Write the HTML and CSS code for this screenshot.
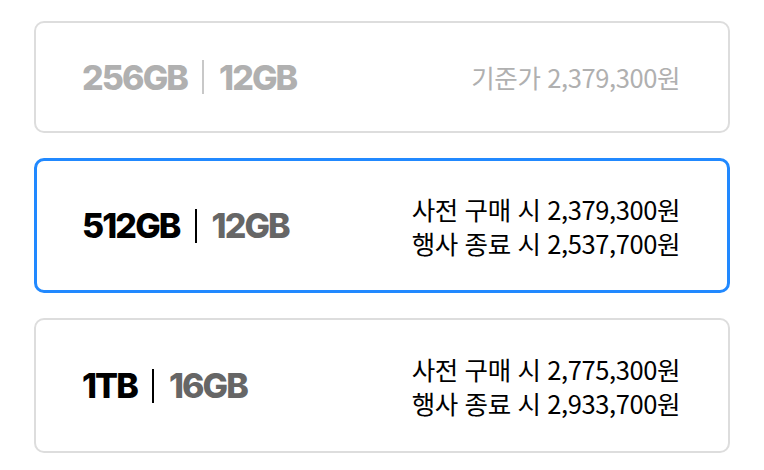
FILE: index.html
```html
<!DOCTYPE html>
<html lang="ko">
<head>
    <meta charset="UTF-8">
    <meta name="viewport" content="width=device-width, initial-scale=1.0">
    <title>저장 용량 선택</title>
    <link rel="stylesheet" href="styles.css">
</head>
<body>
    <div class="opcoes">
        <div class="opcao desativada">
            <div class="capacidade">
                <span class="armazenamento">256GB</span>
                <span class="divisor"></span>
                <span class="memoria">12GB</span>
            </div>
            <div class="preco">기준가 2,379,300원</div>
        </div>
        <div class="opcao selecionada">
            <div class="capacidade">
                <span class="armazenamento">512GB</span>
                <span class="divisor"></span>
                <span class="memoria">12GB</span>
            </div>
            <div class="preco">
                사전 구매 시 2,379,300원<br>
                행사 종료 시 2,537,700원
            </div>
        </div>
        <div class="opcao">
            <div class="capacidade">
                <span class="armazenamento">1TB</span>
                <span class="divisor"></span>
                <span class="memoria">16GB</span>
            </div>
            <div class="preco">
                사전 구매 시 2,775,300원<br>
                행사 종료 시 2,933,700원
            </div>
        </div>
    </div>
</body>
</html>
```

FILE: styles.css
```css
body {
    margin: 0;
    background: #fff;
    font-family: "Noto Sans CJK KR", "Noto Sans", sans-serif;
}
.opcoes {
    padding: 21px 34px;
    display: flex;
    flex-direction: column;
    gap: 25px;
}
.opcao {
    box-sizing: border-box;
    height: 135px;
    border: 2px solid #dddddd;
    border-radius: 10px;
    padding: 0 48px 0 46px;
    display: flex;
    justify-content: space-between;
    align-items: center;
}
.opcao.desativada {
    height: 112px;
}
.opcao.selecionada {
    border: 3px solid #2189ff;
    padding: 0 47px 0 45px;
}
.capacidade {
    display: flex;
    align-items: center;
    gap: 15px;
    font-family: Inter, "Liberation Sans", sans-serif;
    font-weight: 800;
    font-size: 34px;
    letter-spacing: -1.9px;
}
.armazenamento {
    color: #000;
}
.memoria {
    color: #666;
}
.divisor {
    width: 2px;
    height: 34px;
    background: #000;
}
.preco {
    font-size: 25.5px;
    line-height: 34px;
    letter-spacing: -0.4px;
    color: #000;
    text-align: right;
}
.desativada .armazenamento,
.desativada .memoria,
.desativada .preco {
    color: #b0b0b0;
}
.desativada .divisor {
    background: #c8c8c8;
}
```
